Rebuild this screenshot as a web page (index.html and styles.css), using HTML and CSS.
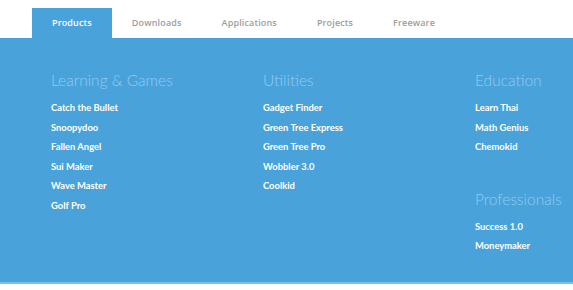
FILE: index.html
```html
<!DOCTYPE html>
<html lang="en">
<head>
  <meta charset="UTF-8">
  <meta name="viewport" content="width=device-width, initial-scale=1.0">
  <title>Products Menu</title>
  <link rel="stylesheet" href="styles.css">
</head>
<body>

  <ul class="tabs">
    <li><a class="active" href="#">Products</a></li>
    <li><a href="#">Downloads</a></li>
    <li><a href="#">Applications</a></li>
    <li><a href="#">Projects</a></li>
    <li><a href="#">Freeware</a></li>
  </ul>

  <div class="panel">
    <div class="col">
      <div class="group">
        <h3>Learning &amp; Games</h3>
        <ul>
          <li><a href="#">Catch the Bullet</a></li>
          <li><a href="#">Snoopydoo</a></li>
          <li><a href="#">Fallen Angel</a></li>
          <li><a href="#">Sui Maker</a></li>
          <li><a href="#">Wave Master</a></li>
          <li><a href="#">Golf Pro</a></li>
        </ul>
      </div>
    </div>

    <div class="col">
      <div class="group">
        <h3>Utilities</h3>
        <ul>
          <li><a href="#">Gadget Finder</a></li>
          <li><a href="#">Green Tree Express</a></li>
          <li><a href="#">Green Tree Pro</a></li>
          <li><a href="#">Wobbler 3.0</a></li>
          <li><a href="#">Coolkid</a></li>
        </ul>
      </div>
    </div>

    <div class="col">
      <div class="group">
        <h3>Education</h3>
        <ul>
          <li><a href="#">Learn Thai</a></li>
          <li><a href="#">Math Genius</a></li>
          <li><a href="#">Chemokid</a></li>
        </ul>
      </div>
      <div class="group">
        <h3>Professionals</h3>
        <ul>
          <li><a href="#">Success 1.0</a></li>
          <li><a href="#">Moneymaker</a></li>
        </ul>
      </div>
    </div>
  </div>

</body>
</html>
```

FILE: styles.css
```css
/* mega menu */

body {
  margin: 0;
  background-color: #fff;
  font-family: Lato, "Open Sans", sans-serif;
}

ul {
  list-style: none;
  margin: 0;
  padding: 0;
}

a {
  text-decoration: none;
}

/* Tabs */
.tabs {
  display: flex;
  padding: 8px 0 0 32px;
}

.tabs li a {
  display: block;
  height: 30px;
  line-height: 30px;
  padding: 0 20px;
  font-family: "Open Sans", sans-serif;
  font-size: 9px;
  font-weight: 600;
  letter-spacing: 0.15px;
  color: #9d9d9d;
}

.tabs li a.active {
  background-color: #4aa2db;
  color: #fff;
}

/* Panel */
.panel {
  display: flex;
  background-color: #4aa2db;
  height: 246px;
  padding: 30px 0 0 51px;
  box-sizing: border-box;
  border-bottom: 2px solid #78c3ee;
}

.col {
  width: 212px;
}

.col:last-child {
  width: auto;
}

.group + .group {
  margin-top: 30px;
}

.group h3 {
  margin: 0 0 6px;
  font-size: 15.5px;
  font-weight: 300;
  line-height: 24px;
  color: #91cdf2;
}

.group li a {
  display: block;
  font-size: 9.4px;
  font-weight: 700;
  line-height: 19.5px;
  color: #fff;
}
```
